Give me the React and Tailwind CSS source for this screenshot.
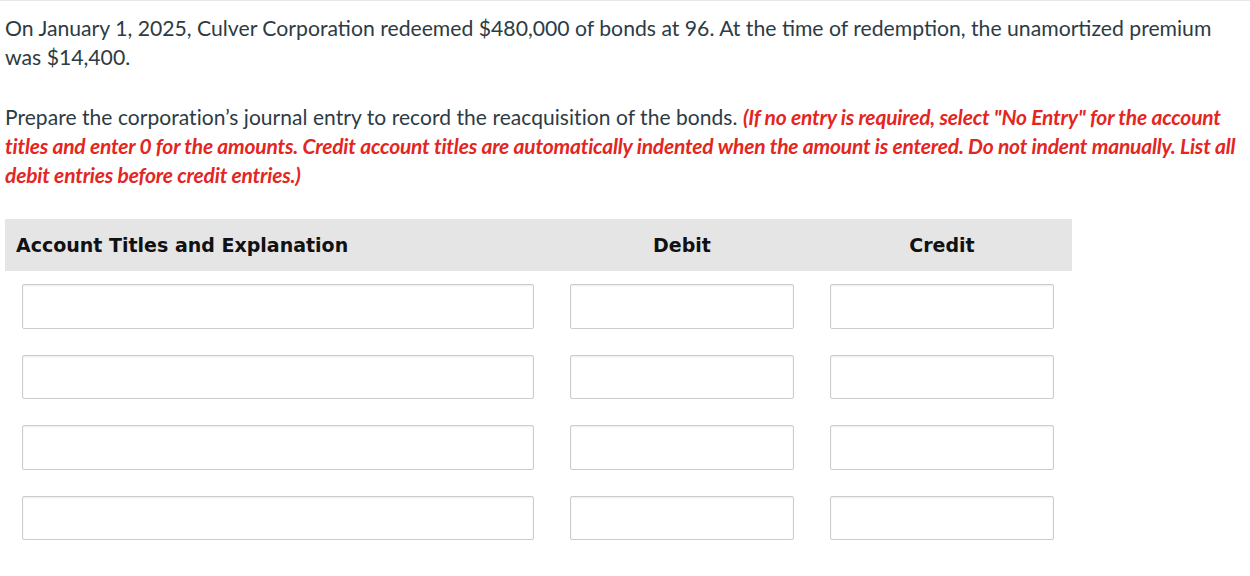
import React from 'react';

const ROWS = [0, 1, 2, 3];

const inputClass =
  'block h-[44.5px] w-full rounded-[2px] border border-[#cccccc] bg-white shadow-[inset_0_1px_2px_rgba(0,0,0,0.08)] outline-none';

const JournalRow = () => (
  <div className="grid grid-cols-[547px_260px_260px] py-[13px]">
    <div className="pl-[17px] pr-[18px]">
      <input type="text" className={inputClass} />
    </div>
    <div className="px-[18px]">
      <input type="text" className={inputClass} />
    </div>
    <div className="px-[18px]">
      <input type="text" className={inputClass} />
    </div>
  </div>
);

export default function App() {
  return (
    <div className="min-h-screen bg-white">
      <div className="border-t border-[#e8e8e8] pl-[5px] pr-[12px] pt-[13px] font-['Lato','Open_Sans',sans-serif] leading-[29px] text-[#2d3b45]">
        <p className="text-[21.2px]">
          On January 1, 2025, Culver Corporation redeemed $480,000 of bonds at 96. At the time of redemption, the
          unamortized premium was $14,400.
        </p>

        <p className="mt-[30px] text-[21px]">
          <span className="tracking-[0.05px]">
            Prepare the corporation’s journal entry to record the reacquisition of the bonds.
          </span>{' '}
          <span className="font-bold italic tracking-[-0.2px] text-[#e3261f]">
            (If no entry is required, select "No Entry" for the account titles and enter 0 for the amounts. Credit
            account titles are automatically indented when the amount is entered. Do not indent manually. List all
            debit entries before credit entries.)
          </span>
        </p>

        {/* Journal table */}
        <div className="mt-[30px] w-[1067px]">
          <div className="grid h-[52px] grid-cols-[547px_260px_260px] items-center bg-[#e5e5e5] font-['DejaVu_Sans',Verdana,sans-serif] text-[19px] font-bold leading-none text-[#111111]">
            <div className="pl-[11px]">Account Titles and Explanation</div>
            <div className="text-center">Debit</div>
            <div className="text-center">Credit</div>
          </div>
          {ROWS.map((r) => (
            <JournalRow key={r} />
          ))}
        </div>
      </div>
    </div>
  );
}
